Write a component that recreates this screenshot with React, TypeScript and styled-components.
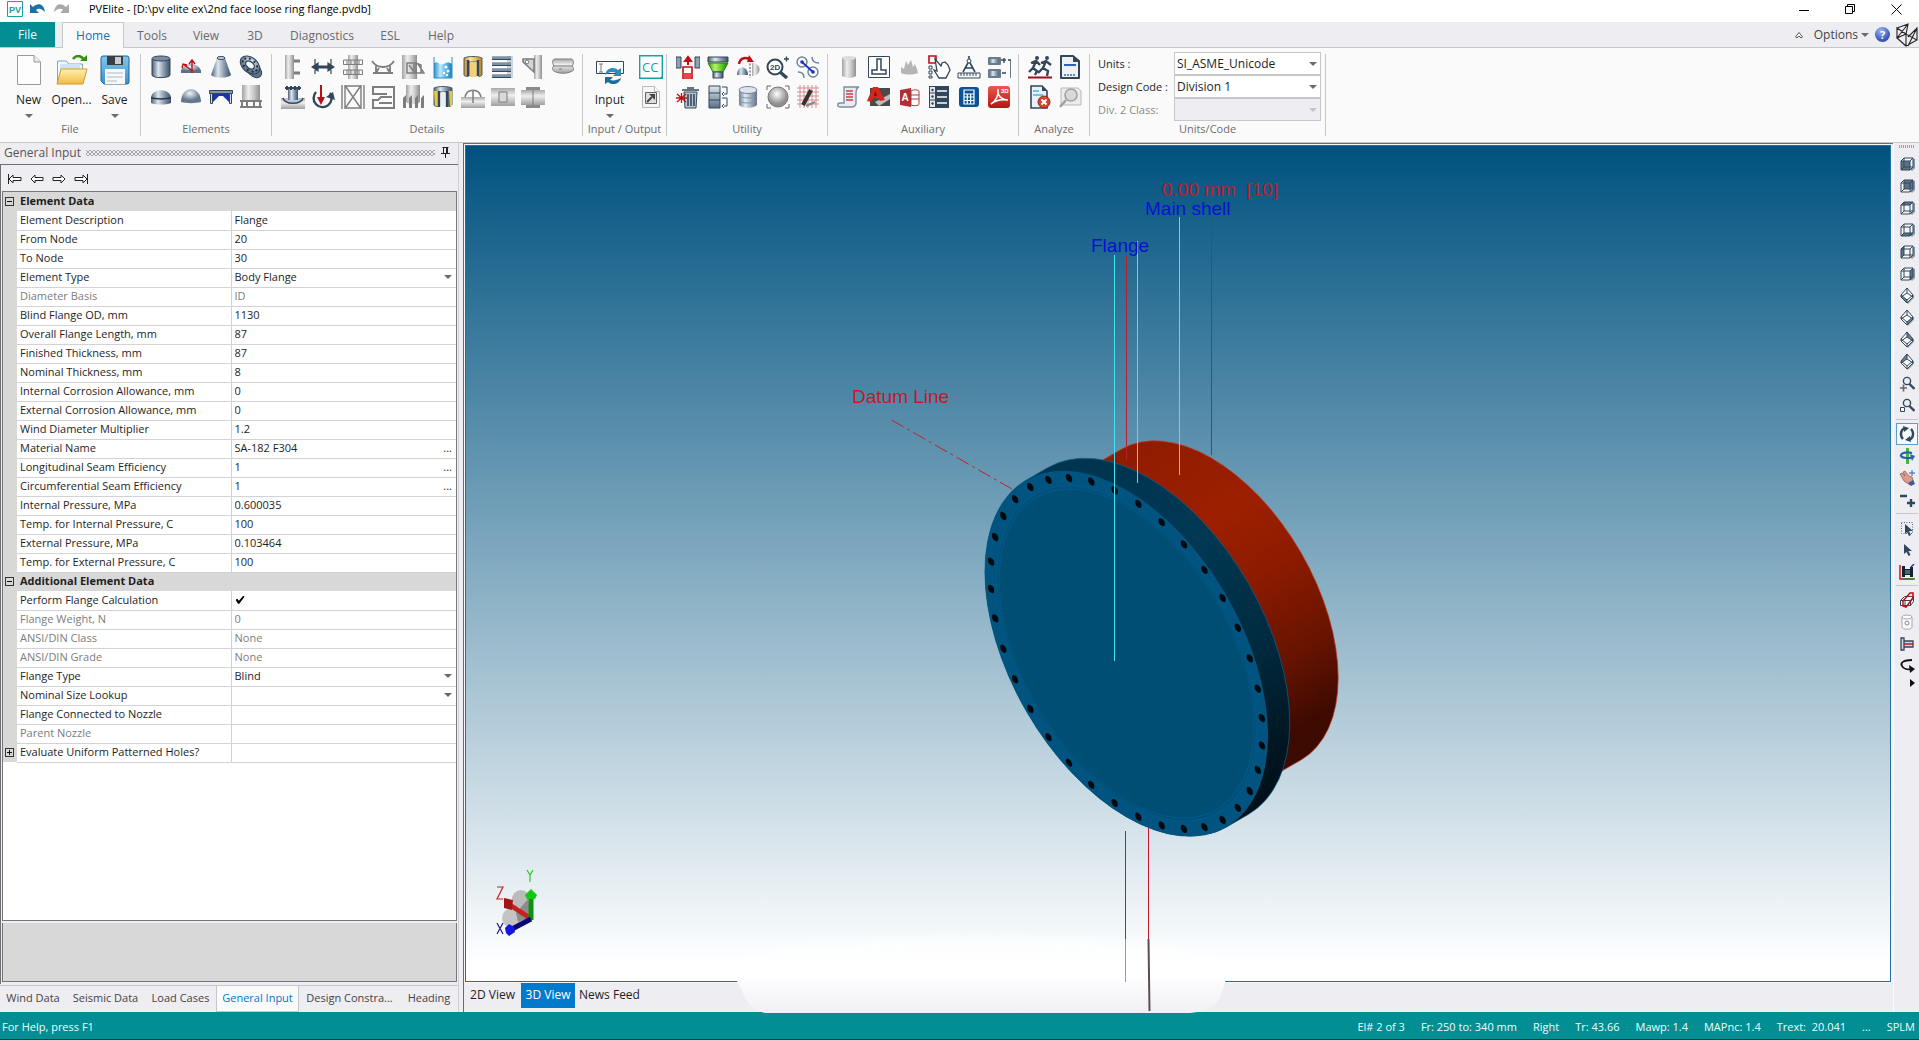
import React from 'react';
import styled, { createGlobalStyle, css } from 'styled-components';

const font = '"Open Sans", "Noto Sans", sans-serif';
const c = {
  chrome: '#eeedf2',
  ribbon: '#fafafb',
  line: '#c6c6cb',
  teal: '#028e93',
  ink: '#1e1e1e',
  mute: '#6d6d6d',
  off: '#8a8a8a',
  accent: '#0078d0',
  steel: '#33475b',
};

const Global = createGlobalStyle`
  *, *::before, *::after { box-sizing: border-box; }
  html, body { margin: 0; height: 100%; }
  #root { height: 100%; }
  body { font: 12px/16px ${font}; color: ${c.ink}; background: ${c.chrome}; overflow: hidden; }
  button, input, select { font: inherit; color: inherit; margin: 0; padding: 0; border: 0; background: none; border-radius: 0; }
  a { color: inherit; text-decoration: none; }
`;

/* ---------- shell ---------- */
const Page = styled.div`display: flex; flex-direction: column; height: 100vh;`;
const TitleBar = styled.header`
  display: flex; align-items: center; height: 22px; padding: 0 0 4px 7px; background: #fff; flex: none;
`;
const QuickTools = styled.div`display: flex; gap: 7px; align-items: center; width: 82px;`;
const Title = styled.h1`margin: 0; flex: 1; font-size: 11px; font-weight: 400; line-height: 16px; color: #000; white-space: nowrap;`;
const WindowTools = styled.div`display: flex;`;
const WindowButton = styled.button`width: 46px; height: 18px; display: grid; place-items: center;`;
const BareButton = styled.button`display: grid; place-items: center;`;

const TabBar = styled.nav`
  display: flex; height: 26px; flex: none; background: ${c.chrome}; border-bottom: 1px solid ${c.line};
`;
const FileTab = styled.button`
  width: 55px; margin-right: 7px; height: 25px; background: ${c.teal}; color: #e8ffff; padding-top: 1px;
`;
const RibbonTab = styled.button<{ $on?: boolean; $w: number }>`
  width: ${p => p.$w}px; height: 26px; color: #6a6a6a; padding-top: 1px;
  ${p => p.$on && css`
    color: #1572b0; background: ${c.ribbon}; border: 1px solid ${c.line}; border-bottom: 0;
  `}
`;
const TabTools = styled.div`display: flex; margin-left: auto; align-items: center; gap: 10px; padding-right: 1px;`;
const OptionsButton = styled.button`display: flex; align-items: center; gap: 3px; color: #444; margin-right: -4px;`;
const RightIcons = styled.div`display: flex; align-items: center; gap: 6px;`;
const Help = styled.button`
  width: 15px; height: 15px; border-radius: 50%; color: #fff; font-weight: 700; font-size: 11px; line-height: 15px;
  background: radial-gradient(circle at 40% 25%, #9db6ee, #3f5fc0 60%, #2a3f98);
`;

const Ribbon = styled.section`
  display: flex; height: 95px; flex: none; background: ${c.ribbon}; border-bottom: 1px solid ${c.line}; padding-top: 6px;
`;
const Group = styled.div<{ $w: number; $pad?: number }>`
  width: ${p => p.$w}px; height: 82px; border-right: 1px solid ${c.line}; padding: 1px 0 0 ${p => p.$pad ?? 9}px;
  display: flex; flex-direction: column; justify-content: space-between;
`;
const GroupBody = styled.div`display: flex; height: 64px; gap: 8px;`;
const GroupLabel = styled.div<{ $pad?: number }>`
  text-align: center; color: ${c.mute}; line-height: 14px; margin-left: -${p => p.$pad ?? 9}px; font-size: 11px;
`;
const IconGrid = styled.div<{ $cols: number }>`
  display: grid; grid-template-columns: repeat(${p => p.$cols}, 24px); grid-auto-rows: 24px; gap: 6px; align-content: start;
`;
const Big = styled.button`
  width: 43px; height: 64px; display: flex; flex-direction: column; align-items: center; line-height: 16px;
  svg { flex: none; }
`;
const BigLabel = styled.span`margin: 7px 0 6px; white-space: nowrap;`;
const Bigs = styled.div`display: flex;`;
const Arrow = styled.i<{ $off?: boolean }>`
  width: 0; height: 0; flex: none; border: 4px solid transparent; border-bottom: 0;
  border-top-color: ${p => (p.$off ? '#c4c4ca' : '#6b6b6b')};
`;
const Units = styled.div`display: grid; grid-template-columns: 76px 147px; grid-auto-rows: 23px; margin-top: -3px; align-items: center;`;
const UnitLabel = styled.label<{ $off?: boolean }>`color: ${p => (p.$off ? c.off : c.ink)}; white-space: nowrap; font-size: 11px;`;
const Pick = styled.div`
  position: relative; height: 100%; display: flex; align-items: center;
  ${Arrow} { position: absolute; right: 4px; pointer-events: none; }
`;
const UnitSelect = styled.select`
  appearance: none; width: 100%; height: 23px; border: 1px solid ${c.line}; background: #fff; padding: 0 14px 0 2px;
  &:disabled { background: ${c.chrome}; opacity: 1; }
`;

/* ---------- left panel ---------- */
const Main = styled.main`display: flex; flex: 1; min-height: 0;`;
const Panel = styled.aside`
  width: 459px; flex: none; display: flex; flex-direction: column; border-right: 1px solid #cfcfd4;
`;
const PanelHead = styled.div`
  display: flex; align-items: center; gap: 5px; height: 21px; padding: 0 7px 2px 4px; color: #555; flex: none;
`;
const Dots = styled.div`
  flex: 1; height: 6px; background-image: radial-gradient(#a5a5aa 35%, transparent 40%), radial-gradient(#a5a5aa 35%, transparent 40%);
  background-size: 4px 4px; background-position: 0 0, 2px 2px;
`;
const PanelBody = styled.div`
  flex: 1; min-height: 0; display: flex; flex-direction: column; border-top: 1px solid #6e6e73; border-left: 1px solid #6e6e73;
  padding: 0 1px 2px 1px;
`;
const NavRow = styled.div`display: flex; gap: 6px; height: 26px; padding: 2px 0 0 5px; align-items: center; flex: none;`;
const NavButton = styled.button`width: 16px; height: 16px; display: grid; place-items: center;`;
const GridBox = styled.div`flex: 1; border: 1px solid #77777b; background: #fff; min-height: 0; overflow: hidden;`;
const Hint = styled.div`height: 59px; flex: none; margin-top: 2px; border: 1px solid #77777b; border-top: 0; background: #d8d8d8;`;
const Grid = styled.table`border-collapse: collapse; width: 100%; table-layout: fixed; font-size: 11px; line-height: 16px;`;
const Head = styled.th`
  height: 19px; padding: 0 0 1px 3px; background: #d8d8d8; text-align: left; font-weight: 700; line-height: 16px; font-size: 11px;
`;
const Gutter = styled.td`width: 14px; padding: 0; background: #d8d8d8; vertical-align: middle;`;
const Fold = styled.button`
  display: grid; place-items: center; width: 9px; height: 9px; margin-left: 2px; border: 1px solid #333; font-size: 0;
`;
const Name = styled.td<{ $off?: boolean }>`
  height: 19px; width: 214px; padding: 0 0 1px 3px; border-right: 1px solid #cfd2d4; border-bottom: 1px solid #d3d3d6; white-space: nowrap;
  color: ${p => (p.$off ? '#7c7c7c' : c.ink)}; line-height: 16px;
`;
const Cell = styled.td`height: 19px; padding: 0; border-bottom: 1px solid #d3d3d6;`;
const CellLine = styled.div`
  display: flex; align-items: center; height: 18px; padding: 0 4px 1px 3px;
`;
const Field = styled.input`flex: 1; min-width: 0; height: 16px; line-height: 16px; &:disabled { color: #7c7c7c; }`;
const FieldSelect = styled.select`appearance: none; flex: 1; min-width: 0; height: 16px;`;
const More = styled.button`width: 12px; line-height: 12px; text-align: right;`;
const Check = styled.input`
  appearance: none; width: 9px; height: 8px; margin-left: 1px;
  &:checked { background: #000; clip-path: polygon(0 50%, 20% 38%, 38% 62%, 85% 0, 100% 14%, 42% 100%, 28% 100%); }
`;
const DockTabs = styled.div`display: flex; height: 27px; flex: none; margin-top: 1px; border-top: 1px solid ${c.line};`;
const DockTab = styled.button<{ $on?: boolean; $w: number }>`
  width: ${p => p.$w}px; white-space: nowrap; color: #444; font-size: 11px; flex: none; padding-bottom: 2px;
  ${p => p.$on && css`color: ${c.accent}; background: #fafafb; border: 1px solid ${c.line}; border-top: 0;`}
`;

/* ---------- viewport ---------- */
const ViewColumn = styled.section`
  flex: 1; min-width: 0; margin-left: 4px; display: flex; flex-direction: column;
  border-top: 1px solid #6b6b70; border-left: 1px solid #6b6b70;
`;
const Viewport = styled.div`
  flex: 1; min-height: 0; border: 1px solid #206f9f; margin: 1px 2px 0 1px; box-shadow: 0 0 0 1px #f8f8fa;
  background: linear-gradient(#00527f, #ffffff 98%); position: relative;
`;
const Scene = styled.svg`
  display: block; width: 100%; height: 100%; overflow: visible;
  text { font: 19px "Liberation Sans", Arial, sans-serif; white-space: pre; }
`;
const ViewTabs = styled.div`display: flex; height: 30px; flex: none;`;
const ViewTab = styled.button<{ $on?: boolean; $w: number }>`
  width: ${p => p.$w}px; height: 26px; white-space: nowrap;
  ${p => p.$on && css`background: #007acc; color: #fff;`}
`;
const Side = styled.div`
  width: 26px; flex: none; display: flex; flex-direction: column; align-items: center; border-left: 1px solid #fbfbfd; padding-top: 2px;
`;
const Grip = styled.div`width: 16px; height: 3px; margin-bottom: 5px; background: repeating-linear-gradient(90deg, #a0a0a5 0 1px, transparent 1px 2px);`;
const SideButton = styled.button<{ $on?: boolean }>`
  width: 22px; height: 22px; display: grid; place-items: center; flex: none;
  ${p => p.$on && css`border: 1px solid #5aa0cf; background: #f6f9fc;`}
`;
const SideRule = styled.div`width: 22px; height: 1px; margin: 2px 0 3px; background: ${c.line}; flex: none;`;

const Status = styled.footer`
  display: flex; align-items: center; height: 28px; flex: none; background: ${c.teal}; color: #e9ffff;
  border-bottom: 1px solid #0a4a4a; padding: 2px 4px 0 2px; font-size: 11px; white-space: pre;
`;
const StatusItems = styled.div`display: flex; margin-left: auto; gap: 16px;`;

/* ---------- icons ---------- */
const Defs = () => (
  <svg width="0" height="0" style={{ position: 'absolute' }} aria-hidden="true">
    <defs>
      {([
        ['steel', ['#4a5f76', '#dfe6ed', '#8b9caf', '#3c5067']],
        ['gray', ['#a2a2a2', '#eeeeee', '#c9c9c9', '#8e8e8e']],
        ['gold', ['#c88e2a', '#fde7a6', '#e9be5c', '#b98226']],
        ['blue', ['#2b8fc9', '#bfe8fb', '#5cb9e6', '#1f7fb8']],
        ['green', ['#2f9a10', '#b8f06a', '#5fd02a', '#1f7f08']],
      ] as [string, string[]][]).map(([id, s]) => (
        <linearGradient key={id} id={id}>
          {s.map((k, i) => <stop key={k} offset={[0, 0.35, 0.65, 1][i]} stopColor={k} />)}
        </linearGradient>
      ))}
      <linearGradient id="grayV" x2="0" y2="1"><stop stopColor="#a8a8a8" /><stop offset=".4" stopColor="#efefef" /><stop offset="1" stopColor="#a0a0a0" /></linearGradient>
      <linearGradient id="steelV" x2="0" y2="1"><stop stopColor="#dfe6ed" /><stop offset="1" stopColor="#5a6f86" /></linearGradient>
      <linearGradient id="folder" x2="0" y2="1"><stop stopColor="#fff0b0" /><stop offset="1" stopColor="#f2bd45" /></linearGradient>
      <linearGradient id="disk" x2="0" y2="1"><stop stopColor="#7ec8f0" /><stop offset="1" stopColor="#3793d4" /></linearGradient>
      <linearGradient id="red" x2="0" y2="1"><stop stopColor="#ea5a50" /><stop offset="1" stopColor="#b51510" /></linearGradient>
      <radialGradient id="ball" cx=".45" cy=".35"><stop stopColor="#fff" /><stop offset="1" stopColor="#8f8f8f" /></radialGradient>
      <radialGradient id="ballS" cx=".45" cy=".3"><stop stopColor="#f3f6f9" /><stop offset="1" stopColor="#63788f" /></radialGradient>
    </defs>
  </svg>
);

const st = c.steel;
const gy = '#7d7d7d';
const icons: Record<string, React.ReactNode> = {
  cylinder: <><path d="M3 4v16c0 3.500 18 3.500 18 0V4" fill="url(#steel)" stroke={st} /><ellipse cx="12" cy="3.500" rx="9" ry="2.500" fill="#7b8da0" stroke={st} /></>,
  headArrow: <><path d="M2 18v-2c2-9 18-9 20 0v2z" fill="url(#ballS)" /><path d="M2 15h20v3H2z" fill="#5d7187" /><path d="M13 18V5M10 9l3-4 3 4M12 15L4 9M3 13l1-4 4 1" stroke="#c00d14" strokeWidth="1.400" fill="none" /></>,
  cone: <><path d="M8 3h8l6 17c-3 3.500-17 3.500-20 0z" fill="url(#steel)" /><ellipse cx="12" cy="3" rx="4" ry="1.500" fill="#cfd7de" stroke={st} /></>,
  flange: <><ellipse cx="15" cy="15" rx="9" ry="6" transform="rotate(45 15 15)" fill="#5d7187" stroke={st} /><ellipse cx="11" cy="10" rx="11" ry="7.500" transform="rotate(40 11 10)" fill="url(#ballS)" stroke={st} /><ellipse cx="11" cy="10" rx="5" ry="3.200" transform="rotate(40 11 10)" fill="#f4f6f8" stroke={st} strokeWidth="1.400" /><g transform="rotate(40 11 10)">{[0, 40, 80, 120, 160, 200, 240, 280, 320].map(a => <circle key={a} cx={11 + 8.3 * Math.cos((a * Math.PI) / 180)} cy={10 + 5.4 * Math.sin((a * Math.PI) / 180)} r="1.100" fill="#1e2c3a" />)}</g></>,
  head: <><path d="M2 12c2-9 18-9 20 0v6c-5 2-15 2-20 0z" fill="url(#steel)" /><path d="M2 12c5 1.500 15 1.500 20 0v1.500c-5 1.500-15 1.500-20 0z" fill="#25384b" /></>,
  sphere: <path d="M2 17C2 0 22 0 22 17c-5 1.500-15 1.500-20 0z" fill="url(#ballS)" />,
  body: <><path d="M4 9h16v8l-3-3-3-3h-4l-3 3-3 3z" fill="#1733b8" /><path d="M.500 5.500h23v3H.500z" fill="#8696a6" stroke={st} /><path d="M1.500 8.500h2v10h-2zM20.500 8.500h2v10h-2z" fill="#d7dde2" stroke={st} /></>,
  skirt: <><path d="M3 0h18v17H3z" fill="url(#gray)" /><path d="M1 16h22M1 22h22M3 16v6M8 16v6M15 16v6M21 16v6" stroke={gy} strokeWidth="2" /></>,
  ring: <><path d="M4 0h9v24H4z" fill="url(#gray)" /><path d="M13 6h6M13 18h6" stroke={gy} strokeWidth="3" /></>,
  arrows: <path d="M4 4v15M20 4v15M1 12l6-4v3h10V8l6 4-6 4v-3H7v3z" fill={st} stroke={st} strokeWidth="1.200" />,
  platform: <><path d="M7 0h10v24H7z" fill="url(#gray)" /><path d="M2.500 5h19v4.500h-19zM2.500 15h19v4.500h-19zM6 5v5M10 5v5M14 5v5M18 5v5M6 15v5M10 15v5M14 15v5M18 15v5" fill="none" stroke={gy} /></>,
  saddle: <path d="M1 6c5 8 17 8 22 0M2 18h20M5 11v7M19 11v7M8 13l-3 5M16 13l3 5" fill="none" stroke={gy} strokeWidth="1.800" />,
  clip: <><path d="M1 0h15v24H1z" fill="url(#gray)" /><path d="M6 8h9l5 2v8H6zM8 10l5 7V9M15 8v10h8l-6-9" fill="none" stroke={gy} strokeWidth="1.500" /></>,
  liquid: <><path d="M3 8c4-3 6 3 10 1 3-2 5-2 8 0v14H3z" fill="url(#blue)" /><path d="M3 2v21h18V2" fill="none" stroke="#2a91ca" /><g fill="#fff"><circle cx="15" cy="12" r="1.600" /><circle cx="17" cy="16" r="1.500" /><circle cx="13" cy="18" r="1.300" /><circle cx="16" cy="20" r="1.200" /></g></>,
  insul: <><path d="M3 3c4-2 14-2 18 0v17c-2 2-4 2-4 0V7H8v14c-2 1-5 0-5-1z" fill="url(#gold)" stroke="#4d5a66" /><path d="M9 7h7v15H9z" fill="#f5cf78" /><path d="M7 5v16M17 5v16" stroke={st} strokeWidth="2.400" /></>,
  lining: <><path d="M3 3c4-2 14-2 18 0v17c-2 2-4 2-4 0V7H8v14c-2 1-5 0-5-1z" fill="url(#steel)" stroke="#4d5a66" /><path d="M3 6h4v15H4zM18 6h3v15h-2z" fill="#e6c93c" /><path d="M8 6v16M16 6v16" stroke={st} strokeWidth="2.400" /><path d="M10 7h4v14h-4z" fill="#e8eef4" /></>,
  trays: <><path d="M16 1h6v22h-6z" fill="#cbd3db" /><path d="M1 3h19M1 9h19M1 15h19M1 21h19" stroke="#7f91a5" strokeWidth="3.500" /><path d="M1 4.500h19M1 10.500h19M1 16.500h19M1 22.500h19" stroke={st} /></>,
  lug: <><path d="M13 0h8v24h-8z" fill="url(#gray)" /><path d="M2 4h11v13L2 7z" fill="#d5d5d5" stroke={gy} strokeWidth="1.600" /><circle cx="6" cy="7" r="1.800" fill="#fff" stroke={gy} /></>,
  halfpipe: <><path d="M4 4h16c3 0 3 5 1 7 2 2 2 5 0 5-4 3-14 3-18 0-2-1-2-4 0-5-2-3-2-7 1-7z" fill="url(#grayV)" stroke={gy} /><path d="M3 11h18M8 14h3" stroke={gy} /></>,
  nozzle: <><path d="M0 13h24v11H0z" fill="url(#grayV)" /><path d="M7 4h10v11H7z" fill="url(#steel)" /><path d="M4 3h16M6 1v4M10 1v4M14 1v4M18 1v4" stroke={st} strokeWidth="2" /><path d="M2 13c2 7 18 7 20 0" fill="#b8c8d6" stroke={st} strokeWidth="1.500" /><path d="M7 11h10v4H7z" fill="url(#steel)" /></>,
  moment: <><path d="M5 7a9 9 0 1 0 14 1" fill="none" stroke={st} strokeWidth="2.400" /><path d="M15 12l7-5 2 8z" fill={st} /><path d="M10 0v14" stroke="#c00d14" strokeWidth="2" /><path d="M6 12h8l-4 8z" fill="#c00d14" /></>,
  packing: <path d="M1 0v24M4 0v24M20 0v24M23 0v24M4 1h16M4 23h16M5 2l14 20M19 2L5 22" fill="none" stroke={gy} strokeWidth="1.400" />,
  baffle: <path d="M23 24V2H2v7h14M2 14v9h20M2 15h5l3-3h11M8 18h13" fill="none" stroke={gy} strokeWidth="2" />,
  legs: <><path d="M5 0h14v17c-3 3-11 3-14 0z" fill="url(#gray)" /><path d="M2 13l3-3v13H2zM8 13l3-3v13H8zM14 13l3-3v13h-3zM20 13l3-3v13h-3z" fill={gy} /></>,
  weld: <><path d="M0 12h24v11H0z" fill="url(#grayV)" /><path d="M4 12c2-9 14-9 16 0M12 6v12" fill="none" stroke={gy} strokeWidth="1.500" /></>,
  pad: <><path d="M0 3h24v18H0z" fill="url(#grayV)" /><path d="M8 7h8v10H8z" fill="#d9d9d9" stroke={gy} /></>,
  sleeve: <><path d="M5 2h14v21H5z" fill="#8a8a8a" /><path d="M0 5h24v15H0z" fill="url(#grayV)" /><path d="M12 5v15" stroke={gy} /></>,
  insert: <><path d="M0 2h5v11H0zM19 2h5v11h-5z" fill="#8fa0b0" stroke={st} /><path d="M7 12h9v12H7z" fill="#fff" stroke="#c00d14" strokeWidth="1.600" /><path d="M8 18h7v6H8z" fill="#e0474c" /><path d="M12 10V4M9 6l3-4 3 4z" stroke="#c00d14" strokeWidth="2" /></>,
  funnel: <><path d="M2 2h20v5H2z" fill="url(#steel)" stroke={st} /><path d="M2 8h20l-5 9H7z" fill="url(#green)" stroke="#2f7a14" /><path d="M7 17h10v6H7z" fill="url(#steel)" stroke={st} /></>,
  flip: <><path d="M1 20c0-10 11-10 11 0z" fill="url(#steel)" /><path d="M16 8c10 0 10 13 0 13z" fill="url(#gray)" /><path d="M14 5v18" stroke={st} strokeDasharray="2 1.500" /><path d="M3 9c1-7 8-7 12-4" fill="none" stroke="#c00d14" strokeWidth="2.400" /><path d="M13 0l5 7h-7z" fill="#c00d14" /></>,
  zoom2d: <><circle cx="9" cy="12" r="7.500" fill="#fff" stroke={st} strokeWidth="2" /><path d="M14 17l7 6" stroke={st} strokeWidth="3.400" /><path d="M18 4h5M20.500 1.500v5" stroke={st} strokeWidth="1.300" /><text x="4" y="15" fontSize="8" fontWeight="700" fontFamily="Liberation Sans, sans-serif" fill={st}>2D</text></>,
  link: <><g fill="none" stroke="#6d8197" strokeWidth="1.400"><circle cx="6" cy="7" r="5" /><circle cx="17" cy="17" r="5" /><path d="M16 2c0 5 3 6 7 6M2 17c5 0 6 3 6 6" /></g><path d="M6 7l11 10" stroke="#1a2fd0" strokeWidth="1.800" /><circle cx="6" cy="7" r="1.800" fill="#1a2fd0" /><circle cx="17" cy="17" r="1.800" fill="#1a2fd0" /></>,
  trash: <><path d="M8 7h13l-1 16H9z" fill="#b9c4cf" stroke={st} /><path d="M6 5h17M11 3h7M12 9v12M15 9v12M18 9v12" stroke={st} strokeWidth="1.600" /><path d="M1 9l9 8M1 17l9-8M5.500 8v10M0 13h11" stroke="#c00d14" strokeWidth="1.300" /></>,
  stack: <><path d="M3 1h11v22H3z" fill="url(#steelV)" stroke={st} /><path d="M3 8h11M3 15h11" stroke={st} /><path d="M16 2h5v7h-3M16 13h5v8h-3M18 7l-2 2 2 2M18 19l-2 2 2 2" fill="none" stroke={st} /></>,
  drum: <><path d="M3 5v14c0 5 18 5 18 0V5" fill="url(#steel)" opacity=".8" /><ellipse cx="12" cy="5" rx="9" ry="3.500" fill="#dde4ee" stroke="#7484a0" /><path d="M3 10c0 4 18 4 18 0M3 15c0 4 18 4 18 0" fill="none" stroke="#8492ae" /></>,
  globe: <><circle cx="12" cy="12" r="10" fill="url(#ball)" stroke="#777" /><path d="M1 5V1h4M19 1h4v4M23 19v4h-4M5 23H1v-4" fill="none" stroke="#666" /></>,
  mesh: <><path d="M1 3h22M1 7h22M1 11h22M1 15h22M1 19h22M4 0v23M8 0v23M12 0v23M16 0v23M20 0v23" stroke="#d98b8b" /><path d="M7 20l8-15" stroke="#333" strokeWidth="4" /><path d="M10 21l9-4" stroke="#888" strokeWidth="2" /></>,
  pipe: <><path d="M5 2h14v19c-4 3-10 2-14 0z" fill="url(#gray)" /><ellipse cx="12" cy="3" rx="7" ry="2" fill="#ddd" /></>,
  support: <><path d="M1.500 1.500h21v21h-21z" fill="#fff" stroke={st} /><path d="M10 4h4v11h5v4H5v-4h5z" fill="none" stroke={st} strokeWidth="1.500" /></>,
  quake: <path d="M4 18v-6l3 2 2-8 2 4 3-5 2 7 2-3 2 5 1 4c-5 2-12 2-17 0z" fill="#b5b5b5" />,
  pick: <><path d="M2 1h7v7H2z" fill="#fff" stroke="#c00d14" strokeWidth="1.600" /><path d="M2 11h3v3H2zM2 16h3v3H2zM2 21h3v2H2z" fill="none" stroke={st} /><path d="M8 4l6 7 1-3 3-1 3 3 2 5-4 8h-7l-5-8 3 1z" fill="#fff" stroke={st} strokeWidth="1.300" /></>,
  compass: <><path d="M12 1v3M12 6L6 17M12 6l6 11M8 13h8" stroke={st} strokeWidth="1.600" fill="none" /><circle cx="12" cy="6" r="2" fill="#fff" stroke={st} /><path d="M1 18h22v5H1zM4 18v3M7 18v3M10 18v3M13 18v3M16 18v3M19 18v3" fill="none" stroke={st} /></>,
  vessels: <><path d="M2 3h11v6H2zM2 15h11v7H2z" fill="url(#steel)" stroke="#6a7b8c" strokeWidth="2" strokeLinejoin="round" /><path d="M14 5h5M17 3v5M21 5h3v18M15 18h4" fill="none" stroke={st} strokeWidth="1.400" /></>,
  scroll: <><path d="M7 2h15c-3 1-3 4-3 6v10c0 4-3 4-5 4H3c-3 0-3-4 0-4h4z" fill="#e5ebf1" stroke="#7a8ea3" strokeWidth="1.400" /><path d="M9 6h7M9 9h7M9 12h7M9 15h7" stroke="#c2414a" strokeWidth="1.300" /></>,
  acad: <><path d="M3 3h20v18H3z" fill="#4a4a4a" /><path d="M8 17l15-8v5L12 21z" fill="#bdbdbd" /><path d="M0 16L6 2h5l7 13-5 1-2-3H6l-2 4z" fill="#d62620" /><path d="M8 6l2 5H7z" fill="#6d0d0a" /></>,
  access: <><path d="M14 6c3-2 8-1 8 0v13c0 2-6 2-8 1z" fill="#fff" stroke="#b03a3a" /><path d="M14 10h8M14 14h8" stroke="#b03a3a" /><path d="M3 5l11-2v19L3 20z" fill="#b03038" /><text x="4.500" y="16" fontSize="10" fontWeight="700" fontFamily="Liberation Sans, sans-serif" fill="#fff">A</text></>,
  list: <><path d="M2 1h20v22H2z" fill={st} /><path d="M3 2h5v20H3z" fill="#e2e8ee" /><path d="M10 6h10M10 12h10M10 18h10" stroke="#fff" strokeWidth="1.600" /><path d="M2 8h6M2 15h6" stroke={st} /><g fill={st}><circle cx="5.500" cy="5" r="1.200" /><circle cx="5.500" cy="11.500" r="1.200" /><circle cx="5.500" cy="18.500" r="1.200" /></g></>,
  calc: <><rect x="2" y="2" width="20" height="20" rx="3" fill="#0b5394" /><path d="M7 5h10v14H7zM7 9h10M7 12h10M7 15.500h10M10.300 9v10M13.600 9v10" fill="none" stroke="#fff" strokeWidth="1.200" /></>,
  pdf: <><rect x="1" y="1" width="22" height="22" rx="3" fill="url(#red)" /><path d="M4 19c5-3 8-9 7-15-1 7 4 11 10 11-6-1-12 0-17 4z" fill="none" stroke="#fff" strokeWidth="1.500" /><text x="14" y="8" fontSize="6" fontWeight="700" fontFamily="Liberation Sans, sans-serif" fill="#fff">3D</text></>,
  run: <><g fill="none" stroke={st} strokeWidth="2.400"><path d="M8 6l-3 7 4 3-2 4M5 13l-4 4M3 8l5-2 4 4M18 6l-3 7 5 3-1 5M15 13l-5 5M13 8l5-2 5 4" /></g><circle cx="9" cy="3" r="2" fill={st} /><circle cx="19" cy="3" r="2" fill={st} /><path d="M0 22.500h24" stroke="#a00c12" strokeWidth="2" /></>,
  report: <><path d="M3 1h12l6 5v17H3z" fill="#eef2f7" stroke={st} strokeWidth="2" strokeLinejoin="round" /><path d="M15 1l6 6h-6z" fill={st} /><path d="M6 10h12" stroke="#2a62c8" strokeWidth="2" /><path d="M6 20h12" stroke="#7088a8" strokeDasharray="2 1" strokeWidth="2" /></>,
  stop: <><path d="M3 1h11l5 5v17H3z" fill="#e8f1f8" stroke={st} strokeWidth="1.600" /><path d="M14 1l5 5h-5z" fill={st} /><path d="M5 6h6M5 10h10" stroke="#58aede" strokeWidth="1.500" /><circle cx="16" cy="17" r="6" fill="#d4452c" stroke="#942a16" /><path d="M13.500 14.500l5 5M18.500 14.500l-5 5" stroke="#fff" strokeWidth="2" /></>,
  preview: <><path d="M3 3h17l3 3v14H3z" fill="#ececec" stroke="#b8b8b8" /><circle cx="13" cy="10" r="6" fill="#d9d9d9" stroke="#a2a2a2" strokeWidth="1.600" /><path d="M8 15l-6 7" stroke="#a2a2a2" strokeWidth="2.600" /></>,
  cc: <><path d="M.700.700h22.600v22.600H.700z" fill="#fff" stroke="#14a3a3" strokeWidth="1.400" /><text x="3" y="17" fontSize="13" fontFamily="Open Sans, sans-serif" fill="#14a3a3">CC</text><path d="M24 20v4h-4z" fill="#14a3a3" /></>,
  doc: <><path d="M3.500 1.500h12l5 5v16h-17z" fill="#f7f7f7" stroke="#b9b9b9" /><path d="M15.500 1.500v5h5" fill="#fff" stroke="#b9b9b9" /><path d="M6.500 7.500h11v11h-11z" fill="#ddd" stroke="#666" /><path d="M8 17l5-5" stroke="#444" strokeWidth="2" /><path d="M10 9h6v6z" fill="#444" /></>,
};

const Icon = ({ name, size = 24 }: { name: string; size?: number }) => (
  <svg width={size} height={size} viewBox="0 0 24 24" aria-hidden="true">{icons[name]}</svg>
);
const IconButtons = ({ cols, names }: { cols: number; names: string[] }) => (
  <IconGrid $cols={cols}>
    {names.map(n => <BareButton key={n} aria-label={n}><Icon name={n} /></BareButton>)}
  </IconGrid>
);

const NewIcon = () => (
  <svg width="30" height="30" viewBox="0 0 30 30"><path d="M3.500.500H20L26.500 7v22.500h-23z" fill="#fdfdfd" stroke="#9a9a9a" /><path d="M20 .500V7h6.500" fill="#ececec" stroke="#9a9a9a" /></svg>
);
const OpenIcon = () => (
  <svg width="32" height="30" viewBox="0 0 32 30"><path d="M1.500 27V6h9l2 3h14v18z" fill="#f5f9fc" stroke="#7fa6c2" /><path d="M4 9h20v8H4z" fill="#cfe4f4" /><path d="M5 14h26l-4 15H1z" fill="url(#folder)" stroke="#d39a2c" /><path d="M17 4c4-5 9-3 11 1" fill="none" stroke="#348f14" strokeWidth="2.600" /><path d="M24 6h7V0z" fill="#348f14" /></svg>
);
const SaveIcon = () => (
  <svg width="30" height="30" viewBox="0 0 30 30"><path d="M1 3a2 2 0 0 1 2-2h24a2 2 0 0 1 2 2v24a2 2 0 0 1-2 2H4l-3-3z" fill="url(#disk)" stroke="#2c5f88" /><path d="M7 1h16v9H7z" fill="#3a3f45" /><path d="M15 2h6v7h-6z" fill="#c9ced3" /><path d="M5 14h20v15H5z" fill="#f8f8f8" /><path d="M7 18h16M7 22h16M7 26h10" stroke="#b4bac0" /></svg>
);
const InputIcon = () => (
  <svg width="30" height="30" viewBox="0 0 30 30"><path d="M1.500 6.500h27v12h-27z" fill="#fff" stroke={st} /><path d="M4 9h4M6 9v8M4 17h4" stroke="#777" /><path d="M10 20c1-7 9-9 13-5l3-2v8h-8l3-3c-4-2-7-1-11 2z" fill="#2f8cc0" /><path d="M26 23c-1 6-9 8-13 4l-3 2v-7h8l-3 3c4 1 7 0 11-2z" fill="#1a6d9e" /></svg>
);

const cube = (face: string) => (
  <>
    <path d="M3 5l3-3h9v9l-3 3" fill="#8495a5" transform="translate(1 1)" />
    <path d="M2 5l3-3h9v9l-3 3H2z" fill="#f4f6f8" />
    <path d={face} fill="#5e7285" />
    <path d="M2 5h9v9H2zM5 2h9v9h-9zM2 5l3-3M11 5l3-3M11 14l3-3M2 14l3-3" fill="none" stroke={st} />
  </>
);
const gem = (face: string) => (
  <>
    <path d="M8 1l6 6v2l-6 6-6-6V7z" fill="#9aa7b3" transform="translate(1 1)" />
    <path d="M8 0l6 7v2l-6 6-6-6V7z" fill="#f6f8f9" />
    <path d={face} fill="#6c7f91" />
    <path d="M8 0l6 7v2l-6 6-6-6V7zM2 7l6 5 6-5M8 12v3M8 0v5M8 5L2 9M8 5l6 4" fill="none" stroke={st} />
  </>
);
const lens = <><circle cx="8" cy="5" r="3.600" fill="#e9eef3" stroke={st} strokeWidth="1.400" /><path d="M10.500 8l5 5" stroke={st} strokeWidth="2.400" /></>;
const side: (React.ReactNode | 'rule')[] = [
  cube('M2 5h9v9H2z'), cube('M5 2h9v9H5z'), cube('M2 5l3-3h9l-3 3z'), cube('M2 14l3-3h9l-3 3z'), cube('M2 5l3-3v9l-3 3z'), cube('M11 5l3-3v9l-3 3z'),
  gem('M2 7l6 5v3L2 9z'), gem('M8 12l6-5v2l-6 6z'), gem('M8 0l6 7v2L8 5z'), gem('M8 0L2 7v2l6-4z'),
  <>{lens}<path d="M1 12h7M4.500 8.500v7" stroke="#667" strokeWidth="1.600" /></>,
  <>{lens}<path d="M1.500 9.500h4v4h-4z" fill="#fff" stroke={st} /></>,
  'rule',
  <><path d="M6 2C1 4 1 10 4 13M10 14c5-2 5-8 2-11" fill="none" stroke={st} strokeWidth="2.400" /><path d="M4 0l6 2-5 4zM12 16l-6-2 5-4z" fill={st} /></>,
  <><path d="M7 0h3v16H7z" fill="#46b83c" /><path d="M13 5C6 3 1 6 2 8s8 3 12 1" fill="none" stroke="#2c5fb0" strokeWidth="2.200" /><path d="M11 6l5 2-3 5z" fill="#2c5fb0" /></>,
  <><path d="M1 4l2-1 3 3-2-4 2-1 4 5 3 1 2 6-4 2-6-4z" fill="#dc9c8c" stroke="#8d5548" strokeWidth=".700" /><path d="M9 13l5-3 2 4-4 2z" fill="#3f5f95" /><path d="M13 0v6M10 3h6" stroke="#2c5fb0" /></>,
  <path d="M1 4h7M8 11h8M12 7v8" stroke={st} strokeWidth="2.400" />,
  'rule',
  <><path d="M2.500 2.500h11v11h-11z" fill="none" stroke="#667" strokeDasharray="1 1.500" /><path d="M6 4l8 7H10l2 4-2 1-2-4-2 2z" fill={st} /></>,
  <path d="M5 2l8 7H9.500l2 4-2 1-2-4L5 12z" fill={st} />,
  <><path d="M1 1v14h13" fill="none" stroke="#c00d14" strokeWidth="1.400" /><path d="M4 15h12" stroke="#2a8a2a" strokeWidth="1.600" /><path d="M3 2h3v3h5V3h3v10h-3v-2H6v2H3z" fill="#16232e" /><path d="M6 6h5v4H6z" fill="#3e6f6a" /><path d="M12 3l3-3" stroke="#1a2fd0" strokeWidth="1.400" /></>,
  'rule',
  <><path d="M1.500 8.500l4-4h9l-3 4v5h-10zM1.500 8.500h10M11.500 13.500l3-4v-5M6 8.500v5" fill="#fff" stroke={st} /><path d="M4 14V9l7-8h3v5l-7 9z" fill="none" stroke="#c00d14" strokeWidth="1.500" /></>,
  <><path d="M3 3v10c0 3 10 3 10 0V3" fill="#fafafa" stroke="#a8a8a8" /><ellipse cx="8" cy="3" rx="5" ry="2" fill="#fff" stroke="#a8a8a8" /><circle cx="8" cy="9" r="2" fill="none" stroke="#888" /></>,
  <><path d="M2 2h3v12H2zM5 5h9v6H5z" fill="#cbd5df" stroke={st} strokeWidth="1.300" /><path d="M5 8h9" stroke="#c00d14" strokeWidth="1.400" /></>,
  <><path d="M13 2C4 2 1 5 3 8c1 3 6 4 9 3" fill="none" stroke="#111" strokeWidth="1.800" /><path d="M10 7l6 4-5 4z" fill="#111" /></>,
];

/* ---------- data ---------- */
type Kind = 'text' | 'select' | 'more' | 'check';
type RowT = [string, string, Kind?, boolean?];
const elementRows: RowT[] = [
  ['Element Description', 'Flange'], ['From Node', '20'], ['To Node', '30'], ['Element Type', 'Body Flange', 'select'],
  ['Diameter Basis', 'ID', 'text', true], ['Blind Flange OD, mm', '1130'], ['Overall Flange Length, mm', '87'],
  ['Finished Thickness, mm', '87'], ['Nominal Thickness, mm', '8'], ['Internal Corrosion Allowance, mm', '0'],
  ['External Corrosion Allowance, mm', '0'], ['Wind Diameter Multiplier', '1.2'], ['Material Name', 'SA-182 F304', 'more'],
  ['Longitudinal Seam Efficiency', '1', 'more'], ['Circumferential Seam Efficiency', '1', 'more'],
  ['Internal Pressure, MPa', '0.600035'], ['Temp. for Internal Pressure, C', '100'], ['External Pressure, MPa', '0.103464'],
  ['Temp. for External Pressure, C', '100'],
];
const extraRows: RowT[] = [
  ['Perform Flange Calculation', '', 'check'], ['Flange Weight, N', '0', 'text', true], ['ANSI/DIN Class', 'None', 'text', true],
  ['ANSI/DIN Grade', 'None', 'text', true], ['Flange Type', 'Blind', 'select'], ['Nominal Size Lookup', '', 'select'],
  ['Flange Connected to Nozzle', ''], ['Parent Nozzle', '', 'text', true], ['Evaluate Uniform Patterned Holes?', ''],
];

const FoldMark = ({ plus, label }: { plus?: boolean; label: string }) => (
  <Fold aria-label={label}><svg width="7" height="7"><path d={plus ? 'M1 3.500h5M3.500 1v5' : 'M1 3.500h5'} stroke="#111" /></svg></Fold>
);
const Row = ({ row: [name, value, kind = 'text', off] }: { row: RowT }) => {
  const id = name.toLowerCase().replace(/[^a-z]+/g, '-');
  return (
    <tr>
      <Gutter>{name.startsWith('Evaluate') && <FoldMark plus label="Expand" />}</Gutter>
      <Name $off={off}><label htmlFor={id}>{name}</label></Name>
      <Cell>
        <CellLine>
          {kind === 'select' && <><FieldSelect id={id}><option>{value}</option></FieldSelect><Arrow /></>}
          {kind === 'check' && <Check id={id} type="checkbox" defaultChecked />}
          {(kind === 'text' || kind === 'more') && <Field id={id} defaultValue={value} disabled={off} />}
          {kind === 'more' && <More aria-label={`Browse ${name}`}>...</More>}
        </CellLine>
      </Cell>
    </tr>
  );
};
const Section = ({ title, rows }: { title: string; rows: RowT[] }) => (
  <tbody>
    <tr><Gutter><FoldMark label="Collapse" /></Gutter><Head colSpan={2}>{title}</Head></tr>
    {rows.map(r => <Row key={r[0]} row={r} />)}
  </tbody>
);

/* Isometric projection: a circle in the flange plane becomes the drawn ellipse. */
const swept = (r: number, from: number, to: number) => {
  const t = r * Math.SQRT1_2;
  return `M${-t + from} ${-t - from}L${-t + to} ${-t - to}A${r} ${r} 0 0 1 ${t + to} ${t - to}L${t + from} ${t - from}A${r} ${r} 0 0 1 ${-t + from} ${-t - from}Z`;
};
const holes = Array.from({ length: 36 }, (_, i) => ((i * 10 + 5) * Math.PI) / 180);

const Model = () => (
  <Scene viewBox="0 0 1424 835" preserveAspectRatio="xMidYMid meet" role="img" aria-label="3D model of flange and shell">
    <defs>
      <linearGradient id="shell" gradientUnits="userSpaceOnUse" x1="-40" y1="-170" x2="170" y2="40">
        <stop stopColor="#8e1c00" /><stop offset=".3" stopColor="#9d1f00" /><stop offset=".5" stopColor="#8c1b00" /><stop offset=".75" stopColor="#641300" /><stop offset=".92" stopColor="#3c0a00" />
      </linearGradient>
      <linearGradient id="rim" gradientUnits="userSpaceOnUse" x1="-115" y1="-115" x2="115" y2="115">
        <stop stopColor="#00344f" /><stop offset=".35" stopColor="#003853" /><stop offset=".65" stopColor="#002a3f" /><stop offset=".9" stopColor="#001520" /><stop offset="1" stopColor="#00101a" />
      </linearGradient>
      <linearGradient id="fade" x2="0" y2="1"><stop stopColor="#fdfdfe" /><stop offset="1" stopColor="#f1f1f5" /></linearGradient>
      <filter id="soft"><feGaussianBlur stdDeviation="5" /></filter>
    </defs>
    <ellipse cx="514" cy="815" rx="235" ry="24" fill="#fff" opacity=".6" filter="url(#soft)" />
    <path d="M270 833h490l-6 18q-6 14-30 16H300q-14-2-20-14z" fill="url(#fade)" />
    <path d="M425.500 274L546 343" stroke="#c41e2e" strokeDasharray="14 4 3 4" />
    <g transform="matrix(.866 .5 0 1 660.500 507.500)">
      <path d={swept(146.500, 20, 98)} fill="url(#shell)" stroke="#c53a1c" strokeWidth=".700" />
      <path d={swept(163.500, 0, 25)} fill="url(#rim)" stroke="#0b5f8c" strokeWidth=".700" />
      <circle r="163.500" fill="#01547f" />
      <circle r="150" fill="#015079" stroke="#015a88" />
      <circle r="147" fill="#004e74" stroke="#00588a" />
      {holes.map(a => <circle key={a} cx={157 * Math.sin(a)} cy={-157 * Math.cos(a)} r="3.700" fill="#020a10" />)}
    </g>
    <g fill="none" stroke="#3fe6f2">
      <path d="M648.500 109V515M671.500 95V337M713.500 71V329" />
      <path d="M660.500 110V314M745.500 40V309" stroke="#b81d30" />
      <path d="M659.500 685V793M682.500 682V793" stroke="#c4182a" />
      <path d="M659.500 793V836" stroke="#c98a78" /><path d="M682.500 793L683.500 865" stroke="#5a5052" strokeWidth="2" />
    </g>
    <g fill="#c4182a"><text x="696" y="50">{'0.00 mm\u00a0\u00a0[10]'}</text><text x="386" y="257">Datum Line</text></g>
    <g fill="#0612d2"><text x="679" y="69">Main shell</text><text x="625" y="106">Flange</text></g>
    <g>
      <circle cx="55" cy="753" r="9" fill="#bbb" /><circle cx="46" cy="772" r="10" fill="#c4c4c4" /><path d="M50 767l12-14 4 19-14 4z" fill="#8c8c8c" />
      <path d="M64 772L44 759" stroke="#c42222" strokeWidth="5" /><path d="M38 752l9 2-1 10-8-2z" fill="#a01414" />
      <path d="M65 774V752" stroke="#109010" strokeWidth="5" /><path d="M59 749l6-6 6 6-2 4h-8z" fill="#12c812" />
      <path d="M65 773L46 783" stroke="#080870" strokeWidth="5" /><path d="M39 782l4-4 5 3 1 5-6 4-3-3z" fill="#1616e0" />
      <g fill="none" strokeWidth="1.200"><path d="M61 724l3 5 3-5M64 729v7" stroke="#22cc22" /><path d="M31 741h6l-6 12h6" stroke="#cc2222" /><path d="M31 777l6 11M37 777l-6 11" stroke="#1a1a90" /></g>
    </g>
  </Scene>
);

const tabs: [string, number][] = [['Tools', 56], ['View', 52], ['3D', 46], ['Diagnostics', 88], ['ESL', 48], ['Help', 54]];
const dockTabs: [string, number][] = [['Wind Data', 66], ['Seismic Data', 79], ['Load Cases', 71], ['General Input', 83], ['Design Constra...', 101], ['Heading', 58]];

export default function App() {
  return (
    <Page>
      <Global />
      <Defs />
      <TitleBar>
        <QuickTools>
          <svg width="16" height="16" viewBox="0 0 16 16"><path d="M.500.500h15v15H.500z" fill="#fff" stroke="#14a3a3" /><text x="2" y="11.500" fontSize="9" fontWeight="700" fontFamily="Liberation Sans, sans-serif" fill="#14a3a3">PV</text></svg>
          <BareButton aria-label="Undo"><svg width="16" height="12"><path d="M0 10V1l3 3c5-5 11-3 12 5-4-4-7-4-9-2l3 3z" fill="#1f6fa5" /></svg></BareButton>
          <BareButton aria-label="Redo"><svg width="16" height="12"><path d="M16 10V1l-3 3C8-1 2 1 1 9c4-4 7-4 9-2l-3 3z" fill="#a9a9a9" /></svg></BareButton>
        </QuickTools>
        <Title>PVElite - [D:\pv elite ex\2nd face loose ring flange.pvdb]</Title>
        <WindowTools>
          <WindowButton aria-label="Minimize"><svg width="11" height="11"><path d="M0 6.500h10" stroke="#000" /></svg></WindowButton>
          <WindowButton aria-label="Restore"><svg width="11" height="11"><path d="M.500 2.500h7v7h-7zM2.500 2.500v-2h7v7h-2" fill="none" stroke="#000" /></svg></WindowButton>
          <WindowButton aria-label="Close"><svg width="11" height="11"><path d="M.500.500l10 10M10.500.500l-10 10" stroke="#000" /></svg></WindowButton>
        </WindowTools>
      </TitleBar>
      <TabBar>
        <FileTab>File</FileTab>
        <RibbonTab $on $w={62}>Home</RibbonTab>
        {tabs.map(([t, w]) => <RibbonTab key={t} $w={w}>{t}</RibbonTab>)}
        <TabTools>
          <BareButton aria-label="Collapse ribbon"><svg width="10" height="8"><path d="M1.500 6L5 1.500 8.500 6 7 7 5 5 3 7z" fill="#fff" stroke="#555" /></svg></BareButton>
          <OptionsButton>Options<Arrow /></OptionsButton>
          <RightIcons>
            <Help aria-label="Help">?</Help>
            <svg width="22" height="24" viewBox="0 0 22 24"><path d="M1 5l11-4-2 10zM1 5v10l9-4zM1 15l9 8 11-6-11-6zM12 14l9-9v12M10 11v12M12 23l9-18M1 15L12 1" fill="none" stroke="#222" strokeWidth="1.100" /></svg>
          </RightIcons>
        </TabTools>
      </TabBar>
      <Ribbon>
        <Group $w={141} $pad={7}>
          <Bigs>
            <Big><NewIcon /><BigLabel>New</BigLabel><Arrow /></Big>
            <Big><OpenIcon /><BigLabel>Open...</BigLabel></Big>
            <Big><SaveIcon /><BigLabel>Save</BigLabel><Arrow /></Big>
          </Bigs>
          <GroupLabel $pad={7}>File</GroupLabel>
        </Group>
        <Group $w={131} $pad={8}>
          <IconButtons cols={4} names={['cylinder', 'headArrow', 'cone', 'flange', 'head', 'sphere', 'body', 'skirt']} />
          <GroupLabel $pad={8}>Elements</GroupLabel>
        </Group>
        <Group $w={311}>
          <IconButtons cols={10} names={['ring', 'arrows', 'platform', 'saddle', 'clip', 'liquid', 'insul', 'trays', 'lug', 'halfpipe', 'nozzle', 'moment', 'packing', 'baffle', 'legs', 'lining', 'weld', 'pad', 'sleeve']} />
          <GroupLabel>Details</GroupLabel>
        </Group>
        <Group $w={84} $pad={5}>
          <GroupBody>
            <Big><InputIcon /><BigLabel>Input</BigLabel><Arrow /></Big>
            <IconButtons cols={1} names={['cc', 'doc']} />
          </GroupBody>
          <GroupLabel $pad={5}>Input / Output</GroupLabel>
        </Group>
        <Group $w={161}>
          <IconButtons cols={5} names={['insert', 'funnel', 'flip', 'zoom2d', 'link', 'trash', 'stack', 'drum', 'globe', 'mesh']} />
          <GroupLabel>Utility</GroupLabel>
        </Group>
        <Group $w={191}>
          <IconButtons cols={6} names={['pipe', 'support', 'quake', 'pick', 'compass', 'vessels', 'scroll', 'acad', 'access', 'list', 'calc', 'pdf']} />
          <GroupLabel>Auxiliary</GroupLabel>
        </Group>
        <Group $w={71}>
          <IconButtons cols={2} names={['run', 'report', 'stop', 'preview']} />
          <GroupLabel>Analyze</GroupLabel>
        </Group>
        <Group $w={236} $pad={8}>
          <Units>
            <UnitLabel htmlFor="units">Units :</UnitLabel>
            <Pick><UnitSelect id="units"><option>SI_ASME_Unicode</option></UnitSelect><Arrow /></Pick>
            <UnitLabel htmlFor="code">Design Code :</UnitLabel>
            <Pick><UnitSelect id="code"><option>Division 1</option></UnitSelect><Arrow /></Pick>
            <UnitLabel htmlFor="class" $off>Div. 2 Class:</UnitLabel>
            <Pick><UnitSelect id="class" disabled /><Arrow $off /></Pick>
          </Units>
          <GroupLabel $pad={8}>Units/Code</GroupLabel>
        </Group>
      </Ribbon>
      <Main>
        <Panel>
          <PanelHead>
            <span>General Input</span><Dots />
            <BareButton aria-label="Pin"><svg width="11" height="13"><path d="M2.500 1.500h6M3.500 1v6M7.500 1v6M6.500 1v6M1 7.500h9M5.500 7v5" stroke="#222" fill="none" /></svg></BareButton>
          </PanelHead>
          <PanelBody>
            <NavRow>
              {[['First', 'M1.500 3v10M2 8l4-4v2.500h8v3H6V12z'], ['Previous', 'M2 8l4-4v2.500h8v3H6V12z'], ['Next', 'M14 8l-4-4v2.500H2v3h8V12z'], ['Last', 'M14.500 3v10M14 8l-4-4v2.500H2v3h8V12z']].map(([n, d]) => (
                <NavButton key={n} aria-label={n}><svg width="16" height="16"><path d={d} fill="#fff" stroke="#222" /></svg></NavButton>
              ))}
            </NavRow>
            <GridBox>
              <Grid>
                <colgroup><col style={{ width: 14 }} /><col style={{ width: 214 }} /><col /></colgroup>
                <Section title="Element Data" rows={elementRows} />
                <Section title="Additional Element Data" rows={extraRows} />
              </Grid>
            </GridBox>
            <Hint />
          </PanelBody>
          <DockTabs>{dockTabs.map(([t, w]) => <DockTab key={t} $w={w} $on={t === 'General Input'}>{t}</DockTab>)}</DockTabs>
        </Panel>
        <ViewColumn>
          <Viewport><Model /></Viewport>
          <ViewTabs><ViewTab $w={57}>2D View</ViewTab><ViewTab $on $w={54}>3D View</ViewTab><ViewTab $w={69}>News Feed</ViewTab></ViewTabs>
        </ViewColumn>
        <Side>
          <Grip />
          {side.map((s, i) => s === 'rule'
            ? <SideRule key={i} />
            : <SideButton key={i} $on={i === 13} aria-label={`View tool ${i}`}><svg width="16" height="16" viewBox="0 0 16 16">{s}</svg></SideButton>)}
          <BareButton aria-label="More tools"><svg width="18" height="12"><path d="M12 2l5 4-5 4z" fill="#111" /></svg></BareButton>
        </Side>
      </Main>
      <Status>
        <span>For Help, press F1</span>
        <StatusItems>
          <span>El# 2 of 3</span><span>Fr: 250 to: 340 mm</span><span>Right</span><span>Tr: 43.66</span><span>Mawp: 1.4</span><span>MAPnc: 1.4</span><span>Trext:  20.041</span><span>...</span><span>SPLM</span>
        </StatusItems>
      </Status>
    </Page>
  );
}
